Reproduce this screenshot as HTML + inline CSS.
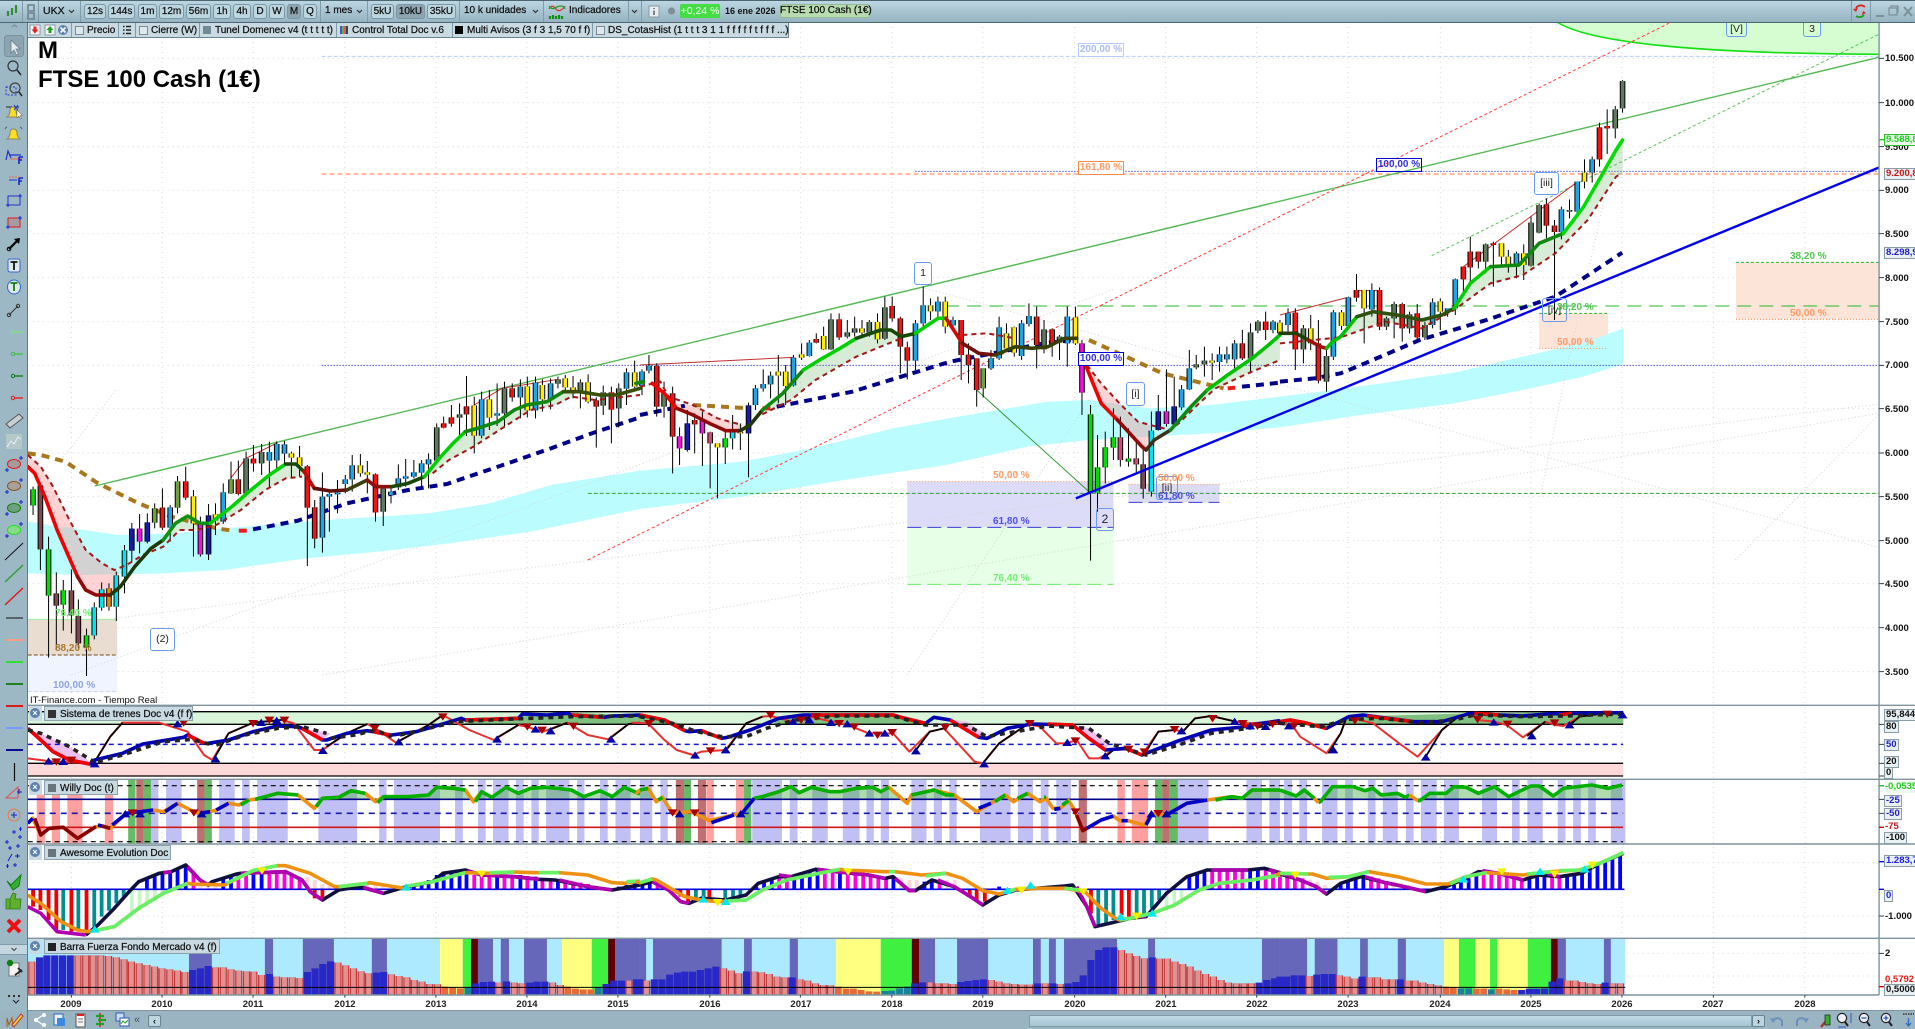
<!DOCTYPE html>
<html lang="es"><head><meta charset="utf-8"><title>FTSE 100 Cash</title>
<style>
html,body{margin:0;padding:0;background:#fff}
#r{position:relative;width:1915px;height:1029px;overflow:hidden;background:#fff;font-family:"Liberation Sans",sans-serif;font-size:10px;color:#111}
#r svg{position:absolute;left:0;top:0;overflow:hidden}
#c *{vector-effect:non-scaling-stroke}
.t,.b,.s,.a,.l,.x,.p,.ck,.sq{position:absolute;white-space:nowrap}
.t{line-height:14px;-webkit-text-stroke:.25px #111}
.b{top:4px;height:13px;line-height:13px;border:1px solid #7b98a6;border-radius:3px;background:#bcd5df;text-align:center;box-sizing:content-box;-webkit-text-stroke:.25px #111}
.on{background:#8ea5b0}
.s{width:1px;background:#7f9caa}
.a{left:1885px;font-weight:bold;font-size:9.5px;line-height:12px;color:#111;height:12px}
.bx{background:#e8f0f4;border:1px solid #8a9ca6;padding:0 1px;line-height:10px;height:10px;box-sizing:content-box}
.l{font-weight:bold;font-size:10px;line-height:12px;height:12px}
.lb{border:1.3px solid;background:#fff;height:12px;line-height:12px;width:44px;text-align:center;font-weight:bold;font-size:10px}
.x{border:1px solid #6a9bf0;border-radius:3px;text-align:center;font-size:10.5px;color:#222;box-sizing:border-box;background:#fff}
.p{left:44px;height:15px;line-height:15px;background:#c9dae2;border:1px solid #8aa0ab;box-sizing:border-box;padding-left:15px;-webkit-text-stroke:.25px #111}
.sq{width:8px;height:8px;top:3px}
.ck{width:7px;height:7px;border:1px solid #7a8c96;background:#dfe8ec;top:26px}
.cl{position:absolute;left:29px;width:13px;height:15px;background:#c9dae2}
.cl i{position:absolute;left:1px;top:2px;width:10px;height:10px;border-radius:50%;background:#5d82ae;color:#fff;font:bold 9px/10px "Liberation Sans",sans-serif;text-align:center}
.y{position:absolute;top:999px;width:30px;text-align:center;font-weight:bold;font-size:9.5px;line-height:12px;color:#222}
</style></head><body><div id="r">

<svg id="c" width="1915" height="1029" viewBox="0 0 4692 3087" preserveAspectRatio="none" fill="none">
<defs>
<marker id="tu" markerUnits="userSpaceOnUse" markerWidth="1" markerHeight="1" overflow="visible"><path d="M-12 10L0-12 12 10z" fill="#0000a8"/></marker>
<marker id="td" markerUnits="userSpaceOnUse" markerWidth="1" markerHeight="1" overflow="visible"><path d="M-12-10L0 12 12-10z" fill="#a80000"/></marker>
<marker id="cu" markerUnits="userSpaceOnUse" markerWidth="1" markerHeight="1" overflow="visible"><path d="M-12 10L0-12 12 10z" fill="#00e8f0"/></marker>
<marker id="yd" markerUnits="userSpaceOnUse" markerWidth="1" markerHeight="1" overflow="visible"><path d="M-12-10L0 12 12-10z" fill="#f4f000"/></marker>

<g id="cS">
<path transform="translate(0 1020)" d="M417 502V563M547 457V545M660 336V362M678 312V361M697 313V341M790 470V593M807 462V470M827 458V463M846 418V432M863 376V418M958 455V465M976 415V442M994 409V416M1014 397V410M1033 370V398M1050 358V373M1180 178V287M1218 220V227M1275 140V172M1312 128V211M1349 130V178M1535 97V146"/>
<path transform="translate(1568 1020)" d="M5 95V138M22 77V92M283 145V195M302 132V145M320 107V133M376 53V136M415 8V48M675-50V62M694-104V-50M730-115V-86M767-60V-44M860 55V85M880-38V55M935-50V48M953-72V-48M1047-70V10M1327 148V202M1346 85V148M1420 43V66M1438 43V58M1457 10V58M1551-55V-30"/>
<path transform="translate(3136 0) scale(.9923 1)" d="M20 940V975M132 937V1070M169 892V978M227 870V928M377 907V975M414 925V935M433 838V925M584 760V800M695 628V696M734 545V635M771 478V518"/>
</g>
<g id="cR">
<path transform="translate(0 1020)" d="M398 503V563M455 424V473M584 418V462M621 356V370M753 379V503M771 502V596M920 403V517M1087 250V263M1106 232V251M1143 199V223M1255 145V172M1461 181V200M1498 157V209"/>
<path transform="translate(1568 1020)" d="M41 78V200M80 160V290M134 240V253M432-3V8M488-62V-8M618-102V-65M638-65V20M655 22V62M787-60V45M805 44V75M825 55V150M972-70V15M1010-32V10M1476 10V55M1533-55V-30"/>
<path transform="translate(3136 0) scale(.9923 1)" d="M38 938V1048M95 1030V1142M189 870V893M246 870V980M302 912V985M339 940V1012M453 800V838M470 755V802M490 755V785M527 730V735M658 613V677M678 677V696M789 382V478M808 378V385"/>
</g>
<g id="cY">
<path transform="translate(0 1020)" d="M474 469V550M528 523V541M714 340V353M734 352V378M883 376V400M900 397V404M1162 196V287M1199 178V233M1292 139V211M1329 135V178M1385 115V142M1404 142V155M1441 127V185M1555 97V140"/>
<path transform="translate(1568 1020)" d="M190 310V322M246 275V280M339 95V107M357 95V138M396 43V53M450-12V28M544-35V-22M582-54V-2M712-104V-86M748-115V-40M898-20V25M917-38V38M1067-68V10M1402 62V68"/>
<path transform="translate(3136 0) scale(.9923 1)" d="M0 968V1000M76 985V1030M152 937V978M208 870V925M396 904V935M547 730V770M564 770V800M602 760V795M752 518V545"/>
</g>
<g id="cD">
<path transform="translate(0 1020)" d="M603 355V460M641 336V370M939 446V515M1070 262V362M1126 223V233M1236 145V220M1367 118V131M1422 127V155M1478 157V197M1516 145V205"/>
<path transform="translate(1568 1020)" d="M59 160V200M468-62V28M508-23V-10M526-35V-22M562-54V-22M600-98V-4M990-32V28M1028-10V8M1363 73V82M1383 62V73M1496-23V55M1514-55V-28"/>
<path transform="translate(3136 0) scale(.9923 1)" d="M58 985V1048M115 1068V1145M263 955V980M282 912V955M320 943V985M358 975V1012M508 733V785M620 668V797M640 615V698M715 630V635M828 328V385M846 243V325"/>
</g>
<g id="cG">
<path transform="translate(0 1020)" d="M81 448V496M119 628V767M155 751V794M212 886V922"/>
<path transform="translate(1568 1020)" d="M209 295V322M1104 223V458M1121 382V458M1140 322V382M1160 292V323M1197 356V365"/>
</g>
<g id="cB">
<path transform="translate(0 1020)" d="M99 436V628M138 760V797M175 751V826M192 828V910"/>
<path transform="translate(1568 1020)" d="M1233 373V446"/>
</g>
<g id="cC">
<path transform="translate(0 1020)" d="M231 802V886M249 748V803M285 706V800M305 631V710"/>
<path transform="translate(1568 1020)" d="M227 272V295M1253 272V455"/>
</g>
<g id="cN">
<path transform="translate(0 1020)" d="M323 566V632M361 547V605M511 526V643"/>
<path transform="translate(1568 1020)" d="M116 250V330M266 196V280M1270 214V270M1309 199V253"/>
</g>
<g id="cM">
<path transform="translate(0 1020)" d="M342 566V605M491 550V643"/>
<path transform="translate(1568 1020)" d="M97 289V325M153 241V280M1083 10V158M1290 214V252"/>
</g>
<g id="cO">
<path transform="translate(0 1020)" d="M379 505V548M435 424V503M566 418V460"/>
<path transform="translate(1568 1020)" d="M841 85V145"/>
</g>
<g id="cP"><path transform="translate(1568 1020)" d="M172 277V310M1177 292V360M1216 355V373"/></g>
<g id="cA"><path transform="translate(0 1020)" d="M267 745V800"/></g>
</defs>

<!-- grid -->
<path stroke="#d8d8d8" stroke-width="1" stroke-dasharray="1 4" d="M175 66V2985M397 66V2985M620 66V2985M845 66V2985M1068 66V2985M1291 66V2985M1514 66V2985M1739 66V2985M1961 66V2985M2185 66V2985M2408 66V2985M2633 66V2985M2856 66V2985M3079 66V2985M3303 66V2985M3529 66V2985M3751 66V2985M3974 66V2985M4198 66V2985M4422 66V2985M68 175H4604M68 308H4604M68 440H4604M68 571H4604M68 701H4604M68 833H4604M68 965H4604M68 1096H4604M68 1226H4604M68 1359H4604M68 1490H4604M68 1622H4604M68 1751H4604M68 1883H4604M68 2015H4604M68 2588H4604M68 2748H4604M68 2860H4604M68 2928H4604"/>

<!-- green ellipse top right -->
<g transform="translate(3136 0) scale(.9923 1)">
<path d="M684 66C760 125 1000 160 1478 163V66Z" fill="#d6fdd2"/>
<path d="M684 66C760 125 1000 160 1478 163" stroke="#14e014" stroke-width="1.6"/>
<path d="M1126 787H1478V958H1126Z" fill="#fde4d8"/>
<path d="M640 940H810V1045H640Z" fill="#fde4d8"/>
</g>

<!-- cyan band -->
<path fill="#bbfdff" d="M68 1565 180 1585 290 1605 420 1600 600 1580 800 1560 1050 1540 1200 1510 1350 1455 1568 1412 1818 1385 1988 1345 2188 1285 2348 1250 2568 1205 2668 1200 2818 1225 2968 1215 3136 1190 3235 1175 3384 1150 3563 1118 3731 1070 3890 1025 3977 985V1092L3880 1130 3731 1170 3563 1210 3334 1245 3136 1282 2968 1300 2818 1310 2668 1320 2518 1340 2318 1395 2068 1440 1818 1490 1568 1527 1300 1595 1100 1630 950 1652 750 1675 550 1710 400 1720 200 1725 68 1720Z"/>

<!-- fib boxes -->
<g transform="translate(0 1020)">
<path d="M68 838H287V945H68Z" fill="#e8ddd0"/><path d="M68 945H287V1055H68Z" fill="#f0f4ff"/>
<path d="M68 838H287" stroke="#a0f0a0" stroke-width="1"/><path d="M68 945H287" stroke="#7a4a10" stroke-dasharray="4 2"/><path d="M68 1055H287" stroke="#c8d4f0" stroke-dasharray="4 2"/>
</g>
<g transform="translate(1568 1020)">
<path d="M655 425H1160V562H655Z" fill="#dcdcf8"/><path d="M655 562H1160V733H655Z" fill="#e6ffe6"/>
<path d="M1197 433H1420V487H1197Z" fill="#dcdcf4"/>
<path d="M655 425H1160M1197 433H1420" stroke="#ff8c4c" stroke-dasharray="1 2"/>
<path d="M655 562H1160M1197 487H1420" stroke="#3c3ce0" stroke-dasharray="14 6"/>
<path d="M655 733H1160" stroke="#66ee66" stroke-dasharray="14 6"/>
</g>
<g transform="translate(3136 0) scale(.9923 1)">
<path d="M1126 787H1478M640 940H810" stroke="#28b828" stroke-dasharray="3 2"/>
<path d="M1126 958H1478M640 1045H810" stroke="#ff8c4c" stroke-dasharray="1 2"/>
</g>

<!-- grey dotted -->
<path stroke="#d4d4d4" stroke-width="1" stroke-dasharray="1 2.5" d="M280 1855L4603 1212M790 2025L4603 1240M2268 865L4603 1642M175 2025L2728 868M150 1380L285 1168M2223 2025L2668 1200M3774 1490 3850 1040 3930 600M4252 1680L4603 1245"/>

<!-- horizontals -->
<path d="M788 169H4604" stroke="#b8ccff" stroke-dasharray="4 2"/>
<path d="M788 522H4604" stroke="#ff7a3a" stroke-dasharray="5 3"/>
<path d="M2243 514H4604" stroke="#0000d8" stroke-dasharray="1 2"/>
<path d="M788 1096H4604" stroke="#0000d8" stroke-dasharray="1 2"/>
<path d="M2316 918H4604" stroke="#28b828" stroke-dasharray="14 8"/>
<path d="M1440 1480H4604" stroke="#33a033" stroke-dasharray="4 2"/>

<!-- trend lines -->
<path d="M232 1458L4603 172" stroke="#55b855" stroke-width="1.4"/>
<path d="M1440 1680L4089 70" stroke="#ff3a3a" stroke-dasharray="3 2.5" stroke-width="1"/>
<path d="M3508 767L4603 103" stroke="#5cc05c" stroke-dasharray="3 2.5" stroke-width="1"/>
<path d="M2393 1170L2668 1475" stroke="#339933" stroke-width="1"/>

<!-- fills -->
<g transform="translate(0 1020)">
<path fill="#ff8080" opacity=".35" d="M68 345 100 380 130 440 170 540 210 630 250 670 290 695 295 740 270 765 235 765 210 750 190 710 165 640 140 570 110 470 85 400 68 380Z"/>
<path fill="#60b060" opacity=".25" d="M400 600 430 550 460 528 490 550 515 550 570 498 610 455 660 405 700 372 725 372 745 395 740 410 700 415 650 450 590 510 530 555 480 570 440 570Z"/>
<path fill="#60b060" opacity=".25" d="M1040 410 1080 350 1110 310 1140 275 1170 265 1220 245 1260 210 1290 195 1340 185 1380 155 1420 155 1400 170 1360 195 1300 210 1230 265 1160 320 1100 360 1060 400Z"/>
</g>
<g transform="translate(1568 1020)">
<path fill="#ff8080" opacity=".35" d="M80 190 130 195 190 235 250 255 245 272 210 272 170 250 130 225 90 205Z"/>
<path fill="#60b060" opacity=".25" d="M265 255 300 210 350 160 400 90 440 60 490 25 530-5 590-30 615-30 640-10 600 15 530 50 430 120 370 180 280 235Z"/>
<path fill="#ff8080" opacity=".35" d="M1090 75 1130 130 1175 190 1220 245 1250 255 1240 330 1170 240 1130 190Z"/>
<path fill="#60b060" opacity=".25" d="M1300 270 1350 200 1390 150 1440 105 1500 55 1540 15 1568-15V60L1490 100 1410 145 1370 190 1320 250Z"/>
</g>
<g transform="translate(3136 0) scale(.9923 1)">
<path fill="#60b060" opacity=".25" d="M150 1010 190 950 230 935 290 945 350 960 400 945 430 925 470 850 520 800 590 795 640 730 700 700 750 620 790 535 830 450 846 420V520L830 530 760 660 680 760 600 825 520 850 430 930 350 985 260 965 150 1012Z"/>
</g>

<!-- slow MA navy/brown -->
<g stroke-width="4" stroke-dasharray="8 6">
<g transform="translate(0 1020)">
<path stroke="#a8781c" d="M68 340 100 345 160 365 240 430 340 490 420 530 530 565 570 572"/>
<path stroke="#f01818" d="M585 572H605"/>
<path stroke="#00008b" d="M620 568 730 542 850 490 1000 450 1095 432 1225 378 1350 325 1450 280 1568 232"/>
</g>
<g transform="translate(1568 1020)">
<path stroke="#00008b" d="M0 225 110 197"/><path stroke="#a8781c" d="M130 195 270 205"/><path stroke="#f01818" d="M300 205H320"/>
<path stroke="#00008b" d="M335 200 520 155 760 65 990 10 1060 0"/><path stroke="#a8781c" d="M1100 0 1200 55 1280 100 1430 145"/><path stroke="#f01818" d="M1440 145 1458 143"/>
<path stroke="#00008b" d="M1475 140 1568 128"/>
</g>
<path transform="translate(3136 0) scale(.9923 1)" stroke="#00008b" d="M0 1145 85 1135 150 1120 210 1090 345 1020 510 960 680 890 845 758"/>
</g>

<!-- thin red swing lines -->
<g stroke="#c03030" stroke-width="1">
<path transform="translate(0 1020)" d="M565 415 603 355 680 308M1162 195 1230 145 1367 118"/>
<path transform="translate(1568 1020)" d="M0 75 375 52"/>
<path transform="translate(3136 0) scale(.9923 1)" d="M0 945 165 893M185 872H246M453 800 735 545"/>
</g>

<!-- wicks -->
<g stroke="#000" stroke-width="1">
<path transform="translate(0 1020)" d="M81 440V525M99 430V690M119 590V953M138 697V930M155 720V872M175 688V880M192 778V925M212 866V1008M231 787V898M249 727V812M267 730V812M285 695V843M305 615V760M323 549V665M342 522V640M361 520V610M379 490V565M398 445V570M417 495V605M435 408V520M455 380V480M474 450V650M491 530V650M511 492V660M528 490V585M547 430V552M566 365V462M584 362V466M603 335V470M621 315V395M641 312V405M660 305V445M678 305V385M697 303V375M714 335V415M734 318V410M753 375V678M771 480V625M790 397V638M807 455V575M827 420V520M846 405V460M863 345V455M883 342V410M900 363V460M920 400V545M939 440V558M958 445V490M976 373V450M994 357V440M1014 360V415M1033 360V440M1050 340V445M1070 250V365M1087 230V265M1106 195V260M1126 190V285M1143 108V288M1162 170V340M1180 155V295M1199 150V270M1218 130V258M1236 125V260M1255 130V185M1275 118V235M1292 110V232M1312 110V235M1329 118V215M1349 115V208M1367 110V145M1385 105V160M1404 108V175M1422 118V205M1441 103V190M1461 172V323M1478 137V225M1498 140V310M1516 130V262M1535 85V195M1555 62V150"/>
<path transform="translate(1568 1020)" d="M5 88V165M22 45V100M41 70V230M59 125V233M80 140V400M97 262V375M116 210V335M134 220V340M153 215V378M172 275V445M190 310V475M209 275V372M227 225V328M246 250V330M266 188V412M283 135V210M302 88V155M320 95V175M339 45V190M357 75V195M376 45V140M396 10V60M415 0V50M432-20V10M450-40V30M468-80V30M488-80V0M508-60V-5M526-70V-10M544-60V-15M562-60V-10M582-80V10M600-130V0M618-130V-55M638-70V100M655 5V118M675-60V90M694-160V-40M712-125V-60M730-130V-60M748-130V-20M767-70V-30M787-60V120M805 10V130M825 55V200M841 85V172M860 30V90M880-70V60M898-50V30M917-40V50M935-60V60M953-110V-40M972-100V85M990-60V40M1010-35V50M1028-15V60M1047-100V80M1067-100V15M1083 0V225M1104 195V662M1121 285V515M1140 275V430M1160 205V360M1177 230V380M1197 265V380M1216 300V400M1233 320V476M1253 215V470M1270 165V272M1290 88V260M1309 110V258M1327 135V210M1346 30V150M1363 45V88M1383 20V110M1402 40V120M1420 20V95M1438 20V70M1457 0V92M1476-30V60M1496-50V100M1514-60V-20M1533-85V0M1551-60V-20"/>
<path transform="translate(3136 0) scale(.9923 1)" d="M0 960V1005M20 925V1000M38 925V1110M58 975V1090M76 945V1050M95 960V1150M115 1040V1175M132 930V1080M152 930V990M169 890V985M189 822V905M208 870V1030M227 850V950M246 862V990M263 950V990M282 905V1015M302 908V1025M320 935V1000M339 912V1020M358 965V1020M377 895V985M396 895V990M414 925V950M433 835V945M453 800V880M470 710V858M490 755V805M508 730V820M527 725V860M547 730V800M564 750V818M584 755V835M602 733V840M620 650V800M640 610V700M658 595V715M678 660V960M695 620V718M715 598V655M734 545V645M752 478V565M771 470V548M789 368V500M808 328V462M828 318V415M846 240V338"/>
</g>

<!-- candle bodies -->
<g stroke="#000" stroke-width="5.6">
<use href="#cS"/><use href="#cR"/><use href="#cY"/><use href="#cD"/><use href="#cG"/><use href="#cB"/><use href="#cC"/><use href="#cN"/><use href="#cM"/><use href="#cO"/><use href="#cP"/><use href="#cA"/>
</g>
<g stroke-width="3.6">
<use href="#cS" stroke="#1ea5e6"/><use href="#cR" stroke="#f01414"/><use href="#cY" stroke="#ffee00"/><use href="#cD" stroke="#5f7a60"/><use href="#cG" stroke="#00e000"/><use href="#cB" stroke="#7a4a50"/><use href="#cC" stroke="#00e6f0"/><use href="#cN" stroke="#1a1aa8"/><use href="#cM" stroke="#f010e0"/><use href="#cO" stroke="#70a040"/><use href="#cP" stroke="#d04878"/><use href="#cA" stroke="#e88a10"/>
</g>

<!-- fast MA + dashed -->
<g stroke="#a01818" stroke-width="2" stroke-dasharray="5 4">
<path transform="translate(0 1020)" d="M68 345 100 380 130 440 170 540 210 630 250 670 280 690 310 675 350 645 400 620 440 570 480 570 530 555 590 510 650 450 700 415 740 410M1060 400 1100 360 1160 320 1230 265 1300 210 1360 195 1400 170 1460 180 1568 165"/>
<path transform="translate(1568 1020)" d="M0 140 50 125 70 170 130 195 190 235 250 255M280 235 370 180 430 120 530 50 600 15 640-5M790-15 850-20 920-5M1095 75 1130 130 1175 190 1220 245 1250 255 1300 270 1320 250 1370 190 1410 145 1490 100 1568 60"/>
<path transform="translate(3136 0) scale(.9923 1)" d="M0 1030 150 1012 260 965 350 985 430 930 520 850 600 825 680 760 760 660 830 530 843 520"/>
</g>
<g stroke-width="3.6" stroke-linejoin="round" stroke-linecap="round">
<g transform="translate(0 1020)">
<path stroke="#f00000" d="M68 380 85 400 110 470 140 570 165 640 190 710"/>
<path stroke="#900808" d="M190 710 210 750 235 765 270 765"/>
<path stroke="#203808" d="M270 765 295 740 330 680 370 625 400 600"/>
<path stroke="#109010" d="M400 600 430 550 460 528 490 550 515 550"/>
<path stroke="#00d000" d="M515 550 570 498 610 455 660 405 700 372"/>
<path stroke="#184808" d="M700 372 725 372 745 395"/>
<path stroke="#c00808" d="M745 395 770 445"/>
<path stroke="#601008" d="M770 445 810 453 850 450"/>
<path stroke="#384008" d="M850 450 900 420"/>
<path stroke="#8a1008" d="M900 420 920 440 960 440"/>
<path stroke="#184808" d="M960 440 1000 430 1040 410"/>
<path stroke="#00d000" d="M1040 410 1080 350 1110 310 1140 275"/>
<path stroke="#108810" d="M1140 275 1170 265 1220 245 1260 210 1290 195 1340 185 1380 155"/>
<path stroke="#3a5008" d="M1380 155 1420 155 1470 165 1510 165 1568 145"/>
</g>
<g transform="translate(1568 1020)">
<path stroke="#108810" d="M-10 130 8 125"/>
<path stroke="#f00000" d="M30 130 60 160 90 205"/>
<path stroke="#900808" d="M90 205 130 225 170 250 210 272 245 272"/>
<path stroke="#203808" d="M245 272 270 255 300 210"/>
<path stroke="#108810" d="M300 210 350 160 400 90"/>
<path stroke="#00d000" d="M400 90 440 60 490 25 530-5"/>
<path stroke="#184808" d="M530-5 590-30 615-30 640-10 675-20"/>
<path stroke="#00d000" d="M675-20 730-65 750-65"/>
<path stroke="#d00808" d="M750-65 790 10"/>
<path stroke="#701008" d="M790 10 830 40 870 45"/>
<path stroke="#384008" d="M870 45 920 20 960 25 1000 20 1040-5 1070-5"/>
<path stroke="#f00000" d="M1085 40 1090 70 1130 190 1170 240"/>
<path stroke="#900808" d="M1170 240 1230 320 1240 330"/>
<path stroke="#403018" d="M1240 330 1260 300 1300 270"/>
<path stroke="#108810" d="M1300 270 1350 200 1390 150"/>
<path stroke="#00c000" d="M1390 150 1440 105 1500 55 1540 15 1568-15"/>
</g>
<g transform="translate(3136 0) scale(.9923 1)">
<path stroke="#204008" d="M0 1000 40 1000 70 1020"/>
<path stroke="#a01008" d="M70 1020 100 1040 115 1045"/>
<path stroke="#00c000" d="M115 1045 130 1025 150 1010 190 950"/>
<path stroke="#305010" d="M190 950 230 935 290 945 350 960 400 945 430 925"/>
<path stroke="#00d000" d="M430 925 470 850 520 800"/>
<path stroke="#108810" d="M520 800 590 795 640 730 700 700"/>
<path stroke="#00dd00" d="M700 700 750 620 790 535 830 450 846 420"/>
</g>
</g>

<path d="M2636 1495L4603 503" stroke="#0000ee" stroke-width="2.4"/>

<!-- SISTEMA -->
<path fill="#d9f5d9" d="M68 2135H3977V2173H68Z"/>
<path fill="#ffd9d9" d="M68 2290H3977V2328H68Z"/>
<g transform="translate(0 2100)">
<path fill="#7fbf7f" d="M1140 55 1270 50 1390 38 1568 45V73H1140Z"/>
<path fill="#eec0ee" d="M68 88 100 100 170 140 220 185 170 180 130 155 100 120ZM740 85 790 95 810 100 790 120ZM300 160 350 140 400 125 350 132Z"/>
</g>
<g transform="translate(1568 2100)">
<path fill="#7fbf7f" d="M0 45 60 60 110 73H0ZM330 55 400 45 620 45 640 52 700 73H330ZM930 73 960 70 1060 73Z"/>
<path fill="#eec0ee" d="M740 55 800 65 850 105 830 112 760 60ZM1070 75 1100 85 1150 130 1140 150 1100 115ZM1240 160 1320 122 1400 90 1470 82 1400 100 1320 132Z"/>
</g>
<path transform="translate(3136 2100) scale(.9923 1)" fill="#7fbf7f" d="M0 65 120 85 170 50 470 40 848 35V73H0Z"/>
<path stroke="#000" stroke-width="1.3" d="M68 2135H3977M68 2173H3977M68 2290H3977M68 2328H3977"/>
<path stroke="#1818d0" stroke-width="1.5" stroke-dasharray="5 4" d="M68 2233H3977"/>
<g stroke-linejoin="round" stroke-width="1.8">
<g transform="translate(0 2100)">
<path stroke="#e83030" stroke-width="2" d="M68 175 130 185 230 190 270 110 300 68 390 68 460 95 500 165 520 180 560 100 620 68 690 60 720 70 770 150 790 150 850 100 900 72 920 85 970 128 1050 75 1085 45 1150 90 1210 120 1270 75 1290 80 1330 95 1390 68 1440 105 1490 118 1540 72 1568 68"/>
<path stroke="#000" d="M232 185 270 110 300 68M525 175 560 100 620 68 690 60M800 140 850 100 900 72M975 125 1050 75 1085 45M1215 115 1270 75M1345 90 1390 68M1500 110 1540 72 1568 68"/>
</g>
<g transform="translate(1568 2100)">
<path stroke="#e83030" stroke-width="2" d="M-20 68 20 70 60 120 90 150 130 165 150 155 210 150 260 70 300 50 320 48 375 65 415 50 510 75 560 100 620 100 660 155 710 95 745 85 820 185 840 190 880 130 950 72 980 80 1020 130 1045 130 1070 120 1100 175 1125 175 1160 150 1195 148 1230 165 1270 95 1310 90 1330 95 1360 55 1400 48 1460 65 1490 70 1568 65"/>
<path stroke="#000" d="M215 145 260 70 300 50M675 152 710 95 745 85M840 190 880 130 950 72M1140 170 1160 150M1240 155 1270 95 1310 90M1330 95 1360 55 1400 48 1460 65M1510 75 1568 65"/>
</g>
<g transform="translate(3136 2100) scale(.9923 1)">
<path stroke="#e83030" stroke-width="2" d="M-10 70 30 75 50 110 115 160 150 100 165 50 230 70 300 135 340 170 400 90 440 50 470 40 490 60 530 65 560 75 600 112 655 65 680 75 700 78 740 50 800 40 846 40"/>
<path stroke="#000" d="M120 160 150 100 165 50M360 170 400 90 440 50 470 40M610 108 655 65M715 75 740 50 800 40 846 40"/>
</g>
</g>
<g stroke-width="3.6" stroke-linejoin="round">
<g transform="translate(0 2100)">
<path stroke="#0000b0" d="M68 85 100 120 130 155 170 180 220 192 232 180 300 160 350 132 400 122 450 112 460 105 500 130 510 130 560 120 620 95 680 78 730 80 740 85 790 120 800 120 850 100 900 92 915 95 955 105 960 105 1020 95 1090 70 1130 55 1140 60 1270 55 1280 42 1340 45 1390 40 1400 45 1480 52 1500 48 1568 45"/>
<path stroke="#f00000" d="M68 85 100 120 130 155 170 180 220 192M460 105 500 130M740 85 790 120M915 95 955 105M1140 60 1270 55M1400 45 1480 52"/>
<path stroke="#222" stroke-dasharray="5 5" d="M68 90 100 100 170 140 230 185M240 185 300 165 350 145 400 125 470 118 520 135M530 135 600 105 680 85 740 80 800 100M810 115 870 105 920 90 960 110M980 105 1050 85 1120 65 1200 60 1300 55 1400 50 1568 48"/>
</g>
<g transform="translate(1568 2100)">
<path stroke="#0000b0" d="M0 45 60 60 110 92 120 95 150 92 200 115 215 112 270 90 340 55 400 45 620 45 640 52 700 70 720 52 760 60 830 112 850 115 900 85 960 72 1060 75 1100 115 1140 150 1190 145 1230 165 1240 160 1320 122 1400 90 1470 82 1510 72 1568 62"/>
<path stroke="#f00000" d="M0 45 60 60 110 92M150 92 200 115M420 45 620 45 640 52 700 70M760 60 830 112M1000 72 1060 75 1100 115 1140 150M1190 145 1230 165M1480 78 1510 72"/>
<path stroke="#222" stroke-dasharray="5 5" d="M0 50 80 70 140 95 200 110 260 110 310 85 380 60 480 48 620 48 700 75 800 75 850 110 920 95 1000 78 1100 85 1150 130 1240 165 1320 135 1400 100 1490 85 1568 68"/>
</g>
<g transform="translate(3136 2100) scale(.9923 1)">
<path stroke="#0000b0" d="M0 65 25 60 60 68 115 85 170 50 205 45 330 65 400 65 470 40 540 45 600 48 660 42 720 40 846 38"/>
<path stroke="#f00000" d="M0 65 25 60 60 68 115 85M215 48 330 65M480 40 540 45M690 45 720 40"/>
<path stroke="#222" stroke-dasharray="5 5" d="M0 70 100 80 170 58 250 55 350 68 430 60 480 45 600 50 700 48 846 42"/>
</g>
</g>
<g transform="translate(0 2100)">
<path marker-start="url(#tu)" marker-mid="url(#tu)" marker-end="url(#tu)" d="M119 184 155 185 232 192 528 177 435 72 640 68 678 62 791 152 977 126 1218 118 1312 88 1349 93 1497 118"/>
<path marker-start="url(#td)" marker-mid="url(#td)" marker-end="url(#td)" d="M138 185 175 180 450 68 620 70 660 60 697 60 918 85 1085 50 1292 80 1328 90 1405 78"/>
</g>
<g transform="translate(1568 2100)">
<path marker-start="url(#tu)" marker-mid="url(#tu)" marker-end="url(#tu)" d="M135 166 210 150 375 65 415 60 468 68 508 72 562 100 600 100 676 153 843 192 1047 128 1140 168 1327 93 1457 65 1495 78 1533 80"/>
<path marker-start="url(#td)" marker-mid="url(#td)" marker-end="url(#td)" d="M22 70 173 152 320 45 395 60 432 50 488 70 525 80 582 105 618 97 748 82 955 70 1067 122 1197 147 1236 155 1310 88 1403 55 1477 70 1513 78 1550 72"/>
</g>
<g transform="translate(3136 2100) scale(.9923 1)">
<path marker-start="url(#tu)" marker-mid="url(#tu)" marker-end="url(#tu)" d="M22 78 132 150 360 172 528 67 622 108 715 75 846 45"/>
<path marker-start="url(#td)" marker-mid="url(#td)" marker-end="url(#td)" d="M35 78 185 62 488 58 562 72 678 68 808 42"/>
</g>

<!-- WILLY -->
<g transform="translate(0 2100)">
<path stroke="#c0c0f4" stroke-width="64" d="M370 334H388M407 334H445M537 334H575M593 334H612M630 334H705M780 334H875M929 334H947M965 334H1078M1115 334H1134M1171 334H1190M1208 334H1246M1264 334H1283M1302 334H1320M1338 334H1395M1414 334H1432M1470 334H1489M1508 334H1545"/>
<path stroke="#ffa0a0" stroke-width="50" d="M90 359H110M127 359H147M165 359H202M257 359H277"/>
<path stroke="#66bb66" stroke-width="64" d="M314 334H332M352 334H370M501 334H519"/>
<path stroke="#c07070" stroke-width="64" d="M334 334H352M483 334H501"/>
</g>
<g transform="translate(1568 2100)">
<path stroke="#c0c0f4" stroke-width="64" d="M0 334H30M50 334H68M275 334H348M367 334H386M422 334H460M497 334H538M555 334H573M590 334H610M665 334H702M720 334H740M758 334H776M833 334H908M926 334H963M982 334H1001M1020 334H1056M1318 334H1393M1486 334H1524M1542 334H1568"/>
<path stroke="#ffa0a0" stroke-width="64" d="M163 334H181M235 334H255M1170 334H1188M1205 334H1245"/>
<path stroke="#66bb66" stroke-width="64" d="M108 334H125M255 334H273M1262 334H1280M1298 334H1318"/>
<path stroke="#c07070" stroke-width="64" d="M88 334H108M142 334H162M1075 334H1095M1280 334H1298"/>
</g>
<path transform="translate(3136 2100) scale(.9923 1)" stroke="#c0c0f4" stroke-width="64" d="M10 334H30M48 334H67M104 334H142M161 334H180M217 334H236M254 334H291M311 334H330M348 334H387M405 334H442M499 334H536M573 334H592M611 334H649M686 334H705M724 334H743M761 334H780M817 334H853"/>
<!-- green area above navy -->
<g fill="#50b050" opacity=".45">
<path transform="translate(0 2100)" d="M775 298 790 295 830 292 860 272 895 280 910 298ZM925 298 940 290 1000 290 1050 285 1070 262 1110 265 1140 270 1150 298ZM1170 298 1180 275 1205 292 1240 262 1270 280 1300 265 1340 262 1400 270 1430 290 1470 272 1500 290 1530 262 1568 282V298Z"/>
<path transform="translate(1568 2100)" d="M0 298V270L20 265 30 298ZM280 295 300 290 340 275 370 260 390 278 420 262 465 275 490 275 530 265 570 262 590 275 610 262 640 298ZM660 298 665 285 720 270 750 285 770 285 790 298ZM1400 300 1450 290 1475 295 1500 270 1568 270V298Z"/>
<path transform="translate(3136 2100) scale(.9923 1)" d="M0 298V270L40 288 60 270 80 290 90 298ZM110 298 130 260 180 260 210 272 230 265 250 285 290 280 310 292 318 298ZM350 298 370 280 410 280 430 260 460 262 490 280 530 260 565 290 595 272 620 258 640 258 675 288 700 265 770 255 810 265 845 255V298Z"/>
</g>
<path stroke="#000" stroke-width="1.2" stroke-dasharray="5 4" d="M68 2357H3977M68 2525H3977"/>
<path stroke="#00008b" stroke-width="1.6" d="M68 2398H3977"/>
<path stroke="#1818b0" stroke-width="1.6" stroke-dasharray="6 5" d="M68 2440H3977"/>
<path stroke="#d01818" stroke-width="1.6" d="M68 2482H3977"/>
<g stroke-width="3.6" stroke-linejoin="round">
<g transform="translate(0 2100)">
<path stroke="#f09010" d="M68 370 80 355 100 405 120 385 155 382 190 415 235 380 250 378 270 385 310 340 375 330 400 335 435 310 475 335 490 340 515 335 530 330 560 310 585 315 610 300 625 298 680 280 730 285 770 325 790 295 830 292 860 272 895 280 920 305 940 290 1000 290 1050 285 1070 262 1110 265 1140 270 1160 305 1180 275"/>
<path stroke="#8a0000" d="M85 355 100 405 120 385 155 382 190 415 235 380M250 378 270 385"/>
<path stroke="#0000c8" d="M68 370 80 355M240 375 250 378M275 375 310 340 375 330M405 335 435 310M490 340 515 335M530 330 560 310"/>
<path stroke="#00b000" d="M590 315 610 300M625 298 680 280 730 285M775 320 790 295 830 292 860 272 895 280M925 308 940 290 1000 290 1050 285 1070 262 1110 265 1140 270M1165 305 1180 275 1205 292 1240 262 1270 280 1300 265 1340 262 1400 270 1430 290 1470 272 1500 290 1530 262 1568 282"/>
<path marker-start="url(#tu)" marker-mid="url(#tu)" marker-end="url(#tu)" stroke="none" d="M307 342 343 342 494 342"/>
<path marker-start="url(#td)" marker-mid="url(#td)" marker-end="url(#td)" stroke="none" d="M325 338 475 338"/>
</g>
<g transform="translate(1568 2100)">
<path stroke="#f09010" d="M-10 282 0 270 20 265 40 305 55 292 80 340 125 335 170 362 230 345 250 340 280 295 300 290 340 275 370 260 390 278 420 262 465 275 490 275 530 265 570 262 590 275 610 262 655 310 665 285 720 270 770 285 825 335 860 310 895 285 915 305 950 280 980 305 995 295 1012 325 1030 325 1050 302 1065 330 1085 392 1130 360 1160 348 1175 362 1195 362 1235 375 1255 340 1290 345 1340 310 1390 300 1450 290 1475 295 1500 270 1568 270"/>
<path stroke="#00b000" d="M0 270 20 265M45 300 55 292M280 295 300 290 340 275 370 260 390 278 420 262 465 275 490 275 530 265 570 262 590 275 610 262M665 285 720 270 750 285 770 285M870 305 895 285M925 295 950 280M990 292H995M1035 315 1050 302M1410 300 1450 290 1475 295 1500 270 1568 270"/>
<path stroke="#0000c8" d="M175 368 230 345M250 340 280 295M830 325 860 310M1015 328 1030 325M1095 385 1130 360 1160 348M1180 362H1195M1240 375 1255 340M1290 345 1340 310 1390 300"/>
<path stroke="#8a0000" d="M1070 345 1085 392 1095 385"/>
<path marker-start="url(#tu)" marker-mid="url(#tu)" marker-end="url(#tu)" stroke="none" d="M97 342 247 342 1253 342 1290 342"/>
<path marker-start="url(#td)" marker-mid="url(#td)" marker-end="url(#td)" stroke="none" d="M80 338 134 338 1067 335 1270 340"/>
</g>
<g transform="translate(3136 2100) scale(.9923 1)">
<path stroke="#00b000" d="M0 270 40 288 60 270 80 290 85 295M95 308 100 305 130 260 180 260 210 272 230 265 250 285 290 280 310 292 320 285M340 302 345 302 370 280 410 280 430 260 460 262 490 280 530 260 565 290 595 272 620 258 640 258 675 288 700 265 770 255 810 265 845 255"/>
<path stroke="#f09010" d="M85 295 95 308M320 285 340 302"/>
</g>
</g>

<!-- AWESOME -->
<g stroke-width="3.8">
<g transform="translate(0 2100)">
<path stroke="#f00000" d="M81 568V620M99 568V630M119 568V660M138 568V695M175 568V695M212 568V700M771 568V595M790 568V598"/>
<path stroke="#008f8f" d="M155 568V690M192 568V695M231 568V680M249 568V650M267 568V632M285 568V610M303 568V590"/>
<path stroke="#c8f4c8" d="M323 568V640M342 568V625M361 568V605M379 568V592M398 568V580"/>
<path stroke="#0000ff" d="M360 568V535M379 568V530M398 568V520M417 568V520M435 568V505M455 568V495M547 568V535M566 568V525M621 568V512M641 568V510M827 568V560M846 568V558M863 568V558M883 568V560M976 568V562M994 568V558M1014 568V555M1033 568V548M1050 568V540M1070 568V525M1087 568V515M1106 568V512M1126 568V510M1143 568V515M1218 568V528M1275 568V525M1312 568V530M1367 568V540M1516 568V560M1535 568V555M1555 568V550"/>
<path stroke="#ff00dd" d="M474 568V515M584 568V520M603 568V518M660 568V512M678 568V512M697 568V515M714 568V525M734 568V535M1162 568V525M1180 568V525M1199 568V530M1236 568V525M1255 568V525M1292 568V528M1329 568V535M1349 568V535M1385 568V540M1404 568V545M1422 568V548M1441 568V552"/>
<path stroke="#ffd4d4" d="M491 568V535M511 568V545M528 568V548M753 568V530M771 568V540M790 568V552M807 568V558M900 568V550M920 568V555M939 568V558M1461 568V560M1478 568V562M1498 568V565"/>
</g>
<g transform="translate(1568 2100)">
<path stroke="#0000ff" d="M6 568V555M24 568V548M285 568V560M304 568V545M323 568V535M378 568V527M397 568V520M416 568V515M435 568V510M490 568V512M621 568V530M697 568V545M715 568V540M865 568V565M880 568V560M1040 568V565M1346 568V530M1365 568V520M1383 568V512M1495 568V512M1514 568V505"/>
<path stroke="#ff00dd" d="M43 568V550M62 568V565M341 568V528M360 568V530M453 568V510M472 568V512M509 568V518M528 568V525M547 568V528M565 568V530M584 568V532M603 568V535M734 568V540M1402 568V510M1420 568V510M1439 568V510M1458 568V510M1476 568V510M1533 568V510M1551 568V515"/>
<path stroke="#ffd4d4" d="M640 568V535M660 568V540M678 568V540M753 568V540M771 568V540M80 568V570"/>
<path stroke="#f00000" d="M99 568V590M118 568V605M170 568V600M808 568V590M825 568V600M845 568V605M1105 568V640M1180 568V645M1198 568V650"/>
<path stroke="#008f8f" d="M137 568V598M156 568V600M209 568V600M228 568V595M246 568V590M790 568V575M1123 568V675M1142 568V670M1160 568V660M1217 568V650M1235 568V650M1254 568V625M1272 568V600"/>
<path stroke="#c8f4c8" d="M1290 568V625M1309 568V620M1327 568V600M1346 568V570"/>
</g>
<g transform="translate(3136 2100) scale(.9923 1)">
<path stroke="#ff00dd" d="M0 568V520M18 568V525M37 568V530M56 568V535M225 568V530M243 568V535M262 568V545M503 568V515M522 568V515M541 568V520M560 568V525M578 568V530M597 568V535M672 568V530M690 568V530"/>
<path stroke="#ffd4d4" d="M75 568V540M93 568V545M112 568V555M280 568V545M298 568V550M318 568V555"/>
<path stroke="#0000ff" d="M150 568V548M168 568V540M187 568V530M206 568V525M430 568V555M447 568V545M466 568V535M485 568V525M616 568V530M635 568V525M653 568V525M709 568V530M727 568V525M746 568V520M765 568V510M784 568V495M803 568V485M821 568V478M840 568V468"/>
</g>
</g>
<path stroke="#0000e0" stroke-width="1.6" d="M68 2668H3980"/>
<g stroke-width="3.6" stroke-linejoin="round">
<g transform="translate(0 2100)">
<path stroke="#101040" d="M210 705 240 675 280 625 320 570 340 545 390 520 420 515 455 495 490 540 510 555 520 545 580 522 590 520 700 515 740 540 760 575 790 600 830 570 880 560 940 580 990 562 1060 545 1085 520 1140 510 1180 525 1260 530 1320 538 1360 540 1440 560 1500 570 1568 555"/>
<path stroke="#b000b0" d="M68 620 100 640 140 695 210 705M400 518 420 515M460 500 490 540 510 555M590 520 700 515 740 540 760 575 790 600M890 562 940 580M1145 512 1180 525 1260 530 1320 538M1370 540 1440 560 1500 570"/>
<path stroke="#f09010" d="M68 585 100 610 150 665 190 690 215 695 240 690 280 680 340 625 400 580 460 550 470 552 550 555 620 512 680 497 700 497 760 520 820 560 830 560 900 550 905 548 990 565 1000 558 1060 545 1140 518 1195 520 1260 516 1310 518 1370 518 1440 525 1500 548 1530 550 1568 543"/>
<path stroke="#66f066" d="M240 690 280 680 340 625 400 580 460 550M555 550 620 512 680 497M830 560 900 550M1000 558 1060 545 1140 518M1200 518 1260 516M1320 518 1370 518M1535 545 1568 543"/>
<path marker-start="url(#cu)" marker-end="url(#cu)" stroke="none" d="M232 688 995 562"/>
<path marker-start="url(#yd)" marker-end="url(#yd)" stroke="none" d="M642 512 1180 522"/>
</g>
<g transform="translate(1568 2100)">
<path stroke="#101040" d="M0 555 30 545 70 570 100 605 120 610 150 595 210 600 260 585 290 550 340 530 370 530 430 508 480 515 560 525 600 535 620 530 660 572 675 572 715 540 770 560 810 590 840 615 880 585 920 570 1040 558 1060 555 1095 620 1115 680 1150 670 1200 655 1240 650 1290 580 1340 530 1390 510 1490 510 1530 505 1568 518"/>
<path stroke="#b000b0" d="M30 545 70 570 100 605 120 610M340 525 370 530M435 508 480 515 560 525 600 535M625 535 660 572 675 572M730 540 770 560 810 590 840 615M1070 560 1095 620 1115 680M1210 650 1240 650M1400 510 1490 510M1540 510 1568 518"/>
<path stroke="#f09010" d="M-10 545 0 548 30 537 40 540 110 590 150 600 190 605 215 603 260 600 300 570 360 540 430 522 490 508 500 510 600 515 625 515 690 525 750 520 790 535 840 572 880 582 920 568 975 565 1040 565 1090 575 1130 625 1165 655 1175 660 1200 655 1255 640 1310 615 1370 570 1420 550 1500 540 1568 525"/>
<path stroke="#66f066" d="M0 548 30 537M215 603 260 600 300 570 360 540 430 522 490 508M610 515H625M700 528 750 520M890 578 920 568M1040 565 1080 570M1175 660 1200 655 1255 640 1310 615 1370 570 1420 550 1500 540 1568 525"/>
<path marker-start="url(#cu)" marker-mid="url(#cu)" marker-end="url(#cu)" stroke="none" d="M155 598 210 605 900 572 957 556 1178 650 1255 640"/>
<path marker-start="url(#yd)" marker-mid="url(#yd)" marker-end="url(#yd)" stroke="none" d="M190 607 510 515 935 570 1085 575 1217 648"/>
</g>
<g transform="translate(3136 2100) scale(.9923 1)">
<path stroke="#101040" d="M-10 518 50 540 90 560 115 582 150 550 200 530 260 548 300 558 360 575 410 560 450 540 490 515 540 520 600 540 640 525 690 530 745 520 790 490 848 460"/>
<path stroke="#b000b0" d="M0 518 50 540 90 560 115 582M210 530 260 548 300 558 360 575M500 512 540 520 600 540M660 520 690 530"/>
<path stroke="#f09010" d="M-10 525 0 520 70 522 80 522 115 535 170 530 220 515 290 530 360 552 415 552 460 530 510 518 600 525 670 515 740 510 790 490 848 458"/>
<path stroke="#66f066" d="M0 520 70 522M120 532 170 530 220 515M420 552 460 530 510 518M610 522 670 515M690 512 740 510 790 490 848 458"/>
<path marker-start="url(#cu)" marker-mid="url(#cu)" marker-end="url(#cu)" stroke="none" d="M453 538 642 515 753 508"/>
<path marker-start="url(#yd)" marker-mid="url(#yd)" marker-end="url(#yd)" stroke="none" d="M38 525 548 515 678 522 772 495"/>
</g>
</g>

<!-- BARRA -->
<path fill="#aeeaff" d="M68 2817H3982V2985H68Z"/>
<g stroke-width="56">
<g transform="translate(0 2100)">
<path stroke="#6666bb" d="M463 801H519M649 801H669M742 801H818M911 801H948M1171 801H1208M1227 801H1247M1284 801H1340M1507 801H1568"/>
<path stroke="#ffff80" d="M1078 801H1134M1377 801H1450"/>
<path stroke="#40f040" d="M1134 801H1154M1450 801H1490"/>
<path stroke="#600000" d="M1154 801H1171M1490 801H1507"/>
</g>
<g transform="translate(1568 2100)">
<path stroke="#6666bb" d="M0 801H15M32 801H200M255 801H274M367 801H387M684 801H723M777 801H853M963 801H982M1002 801H1019M1039 801H1169M1245 801H1262M1524 801H1568"/>
<path stroke="#ffff80" d="M480 801H590"/>
<path stroke="#40f040" d="M590 801H666"/>
<path stroke="#600000" d="M666 801H684"/>
</g>
<g transform="translate(3136 2100) scale(.9923 1)">
<path stroke="#6666bb" d="M0 801H67M86 801H142M198 801H217M291 801H311M686 801H706M800 801H817"/>
<path stroke="#ffff80" d="M405 801H442M482 801H519M536 801H612"/>
<path stroke="#40f040" d="M442 801H482M519 801H536M612 801H669"/>
<path stroke="#600000" d="M669 801H686"/>
</g>
</g>
<!-- blue bars -->
<g stroke-width="7.2" stroke="#2828c8">
<path transform="translate(0 2100)" d="M97 885V772M115 885V766M134 885V766M153 885V766M172 885V766M472 885V810M491 885V805M510 885V798M660 885V822M753 885V816M772 885V805M791 885V792M810 885V784M922 885V818M940 885V816M1166 885V850M1185 885V846M1204 885V845M1241 885V844M1298 885V848M1316 885V845M1335 885V845M1485 885V852M1504 885V842M1523 885V842M1560 885V838"/>
<path transform="translate(1568 2100)" d="M0 885V838M35 885V838M54 885V838M73 885V824M92 885V818M110 885V815M129 885V815M148 885V810M167 885V805M186 885V800M261 885V814M373 885V832M673 885V850M692 885V847M786 885V846M804 885V843M823 885V840M842 885V838M974 885V850M1012 885V850M1049 885V850M1068 885V846M1086 885V826M1105 885V780M1124 885V750M1142 885V742M1161 885V742M1255 885V772M1517 885V848M1536 885V840M1555 885V835"/>
<path transform="translate(3136 2100) scale(.9923 1)" d="M0 885V830M16 885V830M35 885V826M54 885V826M91 885V824M110 885V822M129 885V822M203 885V830M297 885V838M597 885V870M616 885V866M634 885V866M653 885V865M672 885V845M691 885V835M803 885V848"/>
</g>
<!-- rose bars, drawn after the blue ones -->
<g stroke-width="7.2" stroke="#c03838">
<path transform="translate(0 2100)" d="M78 885V785M191 885V766M210 885V766M228 885V766M247 885V766M266 885V768M285 885V772M304 885V778M322 885V785M341 885V790M360 885V795M379 885V800M397 885V805M416 885V808M435 885V812M453 885V816M528 885V802M547 885V802M566 885V808M585 885V812M604 885V814M622 885V815M641 885V825M678 885V830M697 885V832M716 885V832M735 885V834M828 885V788M847 885V796M866 885V805M885 885V814M903 885V820M959 885V823M978 885V828M997 885V832M1015 885V840M1034 885V845M1053 885V852M1072 885V853M1222 885V848M1260 885V848M1279 885V850M1354 885V848M1373 885V855M1541 885V842"/>
<path transform="translate(1568 2100)" d="M16 885V842M205 885V805M224 885V812M242 885V820M280 885V815M298 885V817M317 885V822M336 885V830M355 885V832M392 885V838M411 885V842M430 885V850M449 885V855M467 885V856M711 885V847M730 885V850M748 885V850M767 885V852M861 885V840M880 885V845M899 885V850M918 885V852M936 885V854M955 885V854M993 885V850M1030 885V852M1180 885V750M1199 885V760M1217 885V768M1236 885V775M1273 885V776M1292 885V776M1311 885V785M1330 885V792M1348 885V800M1367 885V812M1386 885V822M1405 885V830M1424 885V840M1442 885V848M1461 885V850M1480 885V850M1498 885V850"/>
<path transform="translate(3136 2100) scale(.9923 1)" d="M72 885V828M147 885V826M166 885V830M185 885V836M222 885V832M241 885V832M260 885V838M278 885V838M316 885V842M334 885V842M353 885V848M372 885V852M391 885V856M710 885V842M729 885V842M747 885V846M766 885V850M785 885V852M822 885V850M841 885V850"/>
</g>
<g stroke-width="4.8" stroke="#e49090">
<path transform="translate(0 2100)" d="M78 885V785M191 885V766M210 885V766M228 885V766M247 885V766M266 885V768M285 885V772M304 885V778M322 885V785M341 885V790M360 885V795M379 885V800M397 885V805M416 885V808M435 885V812M453 885V816M528 885V802M547 885V802M566 885V808M585 885V812M604 885V814M622 885V815M641 885V825M678 885V830M697 885V832M716 885V832M735 885V834M828 885V788M847 885V796M866 885V805M885 885V814M903 885V820M959 885V823M978 885V828M997 885V832M1015 885V840M1034 885V845M1053 885V852M1072 885V853M1222 885V848M1260 885V848M1279 885V850M1354 885V848M1373 885V855M1541 885V842"/>
<path transform="translate(1568 2100)" d="M16 885V842M205 885V805M224 885V812M242 885V820M280 885V815M298 885V817M317 885V822M336 885V830M355 885V832M392 885V838M411 885V842M430 885V850M449 885V855M467 885V856M711 885V847M730 885V850M748 885V850M767 885V852M861 885V840M880 885V845M899 885V850M918 885V852M936 885V854M955 885V854M993 885V850M1030 885V852M1180 885V750M1199 885V760M1217 885V768M1236 885V775M1273 885V776M1292 885V776M1311 885V785M1330 885V792M1348 885V800M1367 885V812M1386 885V822M1405 885V830M1424 885V840M1442 885V848M1461 885V850M1480 885V850M1498 885V850"/>
<path transform="translate(3136 2100) scale(.9923 1)" d="M72 885V828M147 885V826M166 885V830M185 885V836M222 885V832M241 885V832M260 885V838M278 885V838M316 885V842M334 885V842M353 885V848M372 885V852M391 885V856M710 885V842M729 885V842M747 885V846M766 885V850M785 885V852M822 885V850M841 885V850"/>
</g>
<g stroke-width="6.8" stroke="#e86a3a">
<path transform="translate(0 2100)" d="M1090 885V860M1109 885V862M1128 885V865M1391 885V860M1410 885V866M1429 885V868M1448 885V868"/>
<path transform="translate(1568 2100)" d="M486 885V860M505 885V866M523 885V866M542 885V870M561 885V874M580 885V875"/>
<path transform="translate(3136 2100) scale(.9923 1)" d="M410 885V860M428 885V862M485 885V866M503 885V866M541 885V866M560 885V868M578 885V870"/>
</g>
<g stroke-width="6.8" stroke="#1a80a0">
<path transform="translate(0 2100)" d="M1147 885V862M1466 885V862"/>
<path transform="translate(1568 2100)" d="M600 885V873M617 885V872M636 885V865M655 885V860"/>
<path transform="translate(3136 2100) scale(.9923 1)" d="M447 885V865M466 885V865M522 885V868"/>
</g>
<path stroke="#000" stroke-width="1" d="M68 2962H3982"/>

<!-- panel frames & axis -->
<path stroke="#7f949e" stroke-width="1.4" d="M68 2116H4692M68 2338H4692M68 2532H4692M68 2815H4692M68 2985H4604M0 3032H4692M4604 66V2985"/>
<path stroke="#33424a" stroke-width="1" d="M4604 175h12M4604 308h12M4604 440h12M4604 571h12M4604 701h12M4604 833h12M4604 965h12M4604 1096h12M4604 1226h12M4604 1359h12M4604 1490h12M4604 1622h12M4604 1751h12M4604 1883h12M4604 2015h12M4604 2233h12M4604 2173h12M4604 2290h12M4604 2328h12M4604 2357h12M4604 2398h12M4604 2440h12M4604 2482h12M4604 2748h12M4604 2860h12M175 2985v8M397 2985v8M620 2985v8M845 2985v8M1068 2985v8M1291 2985v8M1514 2985v8M1739 2985v8M1961 2985v8M2185 2985v8M2408 2985v8M2633 2985v8M2856 2985v8M3079 2985v8M3303 2985v8M3529 2985v8M3751 2985v8M3974 2985v8M4198 2985v8M4422 2985v8"/>
<path stroke="#0000d0" stroke-width="1.4" d="M4604 2668h12M4604 2585h12"/>
<path stroke="#d00000" stroke-width="1.4" d="M4604 2960h12M4604 2482h12"/>
<path stroke="#20c020" stroke-width="1.4" d="M4604 419h12M4604 2357h12"/>
</svg>

<!-- wave labels -->
<div class="x" style="left:914px;top:262px;width:18px;height:23px;line-height:21px">1</div>
<div class="x" style="left:150px;top:628px;width:25px;height:23px;line-height:21px">(2)</div>
<div class="x" style="left:1096px;top:508px;width:18px;height:23px;line-height:21px;background:none;font-size:12px">2</div>
<div class="x" style="left:1126px;top:382px;width:19px;height:24px;line-height:22px">[i]</div>
<div class="x" style="left:1156px;top:476px;width:22px;height:24px;line-height:22px;background:none">[ii]</div>
<div class="x" style="left:1534px;top:172px;width:25px;height:23px;line-height:21px">[iii]</div>
<div class="x" style="left:1542px;top:298px;width:25px;height:24px;line-height:22px;background:none">[iv]</div>
<div class="x" style="left:1726px;top:16px;width:21px;height:21px;line-height:24px;background:none">[V]</div>
<div class="x" style="left:1803px;top:16px;width:18px;height:21px;line-height:24px;background:none">3</div>

<div class="l lb" style="left:1078px;top:43px;color:#a8bcee;border-color:#b8ccff">200,00 %</div>
<div class="l lb" style="left:1078px;top:161px;color:#ff9a66;border-color:#ff8c4c">161,80 %</div>
<div class="l lb" style="left:1376px;top:158px;color:#3030e0;border-color:#0000d8;background:none">100,00 %</div>
<div class="l lb" style="left:1078px;top:352px;color:#3030e0;border-color:#0000d8">100,00 %</div>

<div class="l" style="left:993px;top:470px;color:#ff9a66">50,00 %</div>
<div class="l" style="left:993px;top:516px;color:#5050e0">61,80 %</div>
<div class="l" style="left:993px;top:573px;color:#70ee70">76,40 %</div>
<div class="l" style="left:1158px;top:473px;color:#ff9a66">50,00 %</div>
<div class="l" style="left:1158px;top:491px;color:#5050e0">61,80 %</div>
<div class="l" style="left:55px;top:608px;color:#70ee70">76,40 %</div>
<div class="l" style="left:55px;top:643px;color:#a87830">88,20 %</div>
<div class="l" style="left:53px;top:680px;color:#8fa5dd">100,00 %</div>
<div class="l" style="left:1790px;top:251px;color:#50c850">38,20 %</div>
<div class="l" style="left:1790px;top:308px;color:#ff9a66">50,00 %</div>
<div class="l" style="left:1557px;top:302px;color:#50c850">38,20 %</div>
<div class="l" style="left:1557px;top:337px;color:#ff9a66">50,00 %</div>

<div style="position:absolute;left:38px;top:37px;font-weight:bold;font-size:24px;line-height:28px;color:#000">M</div>
<div style="position:absolute;left:38px;top:66px;font-weight:bold;font-size:24px;line-height:28px;color:#000;white-space:nowrap">FTSE 100 Cash (1€)</div>
<div style="position:absolute;left:30px;top:695px;font-size:9.5px;line-height:12px;white-space:nowrap;color:#111">IT-Finance.com - Tiempo Real</div>

<!-- price axis -->
<div class="a" style="top:53px">10.500</div><div class="a" style="top:98px">10.000</div>
<div class="a" style="top:142px">9.500</div><div class="a" style="top:185px">9.000</div>
<div class="a" style="top:229px">8.500</div><div class="a" style="top:273px">8.000</div>
<div class="a" style="top:317px">7.500</div><div class="a" style="top:360px">7.000</div>
<div class="a" style="top:404px">6.500</div><div class="a" style="top:448px">6.000</div>
<div class="a" style="top:492px">5.500</div><div class="a" style="top:536px">5.000</div>
<div class="a" style="top:579px">4.500</div><div class="a" style="top:623px">4.000</div>
<div class="a" style="top:667px">3.500</div>
<div class="a bx" style="left:1884px;top:134px;color:#22cc22;border-color:#30c030;background:#eefaee">9.588,8</div>
<div class="a bx" style="left:1884px;top:168px;color:#c01818">9.200,8</div>
<div class="a bx" style="left:1884px;top:247px;color:#2020c0">8.298,9</div>

<div class="a bx" style="left:1884px;top:709px">95,844</div>
<div class="a bx" style="top:721px;left:1884px">80</div>
<div class="a bx" style="top:739px;left:1884px;color:#2020c0">50</div>
<div class="a bx" style="top:756px;left:1884px">20</div>
<div class="a bx" style="top:767px;left:1884px">0</div>
<div class="a" style="top:781px;left:1885px;color:#22cc22;background:#eefaee">-0,0535</div>
<div class="a bx" style="top:795px;left:1884px;color:#2020c0">-25</div>
<div class="a bx" style="top:808px;left:1884px;color:#2020c0">-50</div>
<div class="a" style="top:821px;left:1885px;color:#c01818">-75</div>
<div class="a bx" style="top:832px;left:1884px">-100</div>
<div class="a bx" style="top:855px;left:1884px;color:#2020f0">1.283,7</div>
<div class="a bx" style="top:890px;left:1884px;color:#2020f0">0</div>
<div class="a" style="top:911px">-1.000</div>
<div class="a" style="top:948px">2</div>
<div class="a" style="top:974px;color:#e01818">0,5792</div>
<div class="a bx" style="top:984px;left:1884px">0,5000</div>

<!-- time axis -->
<div class="y" style="left:56px">2009</div><div class="y" style="left:147px">2010</div><div class="y" style="left:238px">2011</div><div class="y" style="left:330px">2012</div><div class="y" style="left:421px">2013</div><div class="y" style="left:512px">2014</div><div class="y" style="left:603px">2015</div><div class="y" style="left:695px">2016</div><div class="y" style="left:786px">2017</div><div class="y" style="left:877px">2018</div><div class="y" style="left:968px">2019</div><div class="y" style="left:1060px">2020</div><div class="y" style="left:1151px">2021</div><div class="y" style="left:1242px">2022</div><div class="y" style="left:1333px">2023</div><div class="y" style="left:1425px">2024</div><div class="y" style="left:1516px">2025</div><div class="y" style="left:1607px">2026</div><div class="y" style="left:1698px">2027</div><div class="y" style="left:1790px">2028</div>

<!-- sub panel tabs -->
<div class="cl" style="top:706px"><i>×</i></div>
<div class="p" style="top:706px;width:149px"><span class="sq" style="left:3px;background:#333"></span>Sistema de trenes Doc v4 (f f)</div>
<div class="cl" style="top:780px"><i>×</i></div>
<div class="p" style="top:780px;width:74px"><span class="sq" style="left:3px;background:#69757c"></span>Willy Doc (t)</div>
<div class="cl" style="top:845px"><i>×</i></div>
<div class="p" style="top:845px;width:127px"><span class="sq" style="left:3px;background:#69757c"></span>Awesome Evolution Doc</div>
<div class="cl" style="top:939px"><i>×</i></div>
<div class="p" style="top:939px;width:176px"><span class="sq" style="left:3px;background:#222"></span>Barra Fuerza Fondo Mercado v4 (f)</div>

<!-- top toolbar -->
<div style="position:absolute;left:0;top:0;width:1915px;height:23px;background:linear-gradient(#bcd6e2,#95b3c1);border-top:1px solid #4c6672;border-bottom:1px solid #4c6672;box-sizing:border-box"></div>
<div class="s" style="left:22px;top:1px;height:21px"></div><div class="s" style="left:38px;top:1px;height:21px"></div><div class="s" style="left:80px;top:1px;height:21px"></div><div class="s" style="left:320px;top:1px;height:21px"></div><div class="s" style="left:367px;top:1px;height:21px"></div><div class="s" style="left:459px;top:1px;height:21px"></div><div class="s" style="left:543px;top:1px;height:21px"></div><div class="s" style="left:628px;top:1px;height:21px"></div><div class="s" style="left:641px;top:1px;height:21px"></div><div class="s" style="left:1851px;top:1px;height:21px"></div><div class="s" style="left:1870px;top:1px;height:21px"></div>
<div class="t" style="left:43px;top:4px;font-size:10.5px">UKX</div>
<div class="b" style="left:84px;width:20px">12s</div><div class="b" style="left:108px;width:25px">144s</div><div class="b" style="left:138px;width:17px">1m</div><div class="b" style="left:159px;width:23px">12m</div><div class="b" style="left:186px;width:23px">56m</div><div class="b" style="left:213px;width:16px">1h</div><div class="b" style="left:233px;width:16px">4h</div><div class="b" style="left:253px;width:12px">D</div><div class="b" style="left:269px;width:14px">W</div><div class="b on" style="left:287px;width:12px">M</div><div class="b" style="left:303px;width:12px">Q</div>
<div class="t" style="left:325px;top:4px">1 mes</div>
<div class="b" style="left:371px;width:21px">5kU</div><div class="b on" style="left:396px;width:27px">10kU</div><div class="b" style="left:427px;width:27px">35kU</div>
<div class="t" style="left:464px;top:4px">10 k unidades</div>
<div class="t" style="left:569px;top:4px">Indicadores</div>
<div class="t" style="left:680px;top:4px;width:40px;height:14px;background:#44dd44;border-radius:2px;color:#fff;text-align:center;-webkit-text-stroke:0;font-size:10.5px">+0,24 %</div>
<div class="t" style="left:725px;top:4px;font-weight:bold;-webkit-text-stroke:0;font-size:9px">16 ene 2026</div>
<div class="t" style="left:780px;top:4px;width:90px;height:14px;background:#b8dcb0;border-radius:3px;box-shadow:inset 0 0 0 1px #94bc94;text-align:center">FTSE 100 Cash (1€)</div>

<!-- row 2 tabs -->
<div style="position:absolute;left:28px;top:23px;width:761px;height:15px;background:#c9dae2;border-bottom:1px solid #6a8592;border-right:1px solid #6a8592;box-sizing:border-box"></div>
<div class="s" style="left:71px;top:23px;height:14px"></div><div class="s" style="left:118px;top:23px;height:14px"></div><div class="s" style="left:135px;top:23px;height:14px"></div><div class="s" style="left:199px;top:23px;height:14px"></div><div class="s" style="left:336px;top:23px;height:14px"></div><div class="s" style="left:452px;top:23px;height:14px"></div><div class="s" style="left:592px;top:23px;height:14px"></div>
<div class="ck" style="left:75px"></div><div class="t" style="left:87px;top:24px">Precio</div>
<div class="ck" style="left:139px"></div><div class="t" style="left:151px;top:24px">Cierre (W)</div>
<div class="sq" style="left:203px;top:26px;background:#708a96"></div><div class="t" style="left:215px;top:24px">Tunel Domenec v4 (t t t t t)</div>
<div class="t" style="left:352px;top:24px">Control Total Doc v.6</div>
<div class="sq" style="left:455px;top:26px;background:#000"></div><div class="t" style="left:467px;top:24px">Multi Avisos (3 f 3 1,5 70 f f)</div>
<div class="ck" style="left:596px"></div><div class="t" style="left:608px;top:24px">DS_CotasHist (1 t t t 3 1 1 f f f f f t f f f ...)</div>

<!-- left toolbar -->
<div style="position:absolute;left:0;top:23px;width:28px;height:988px;background:#9db8c5;border-right:1px solid #5f7c8a;box-sizing:border-box"></div>
<div style="position:absolute;left:4px;top:35px;width:20px;height:22px;background:#8ca4b0;border:1px solid #7a929e;border-radius:3px;box-sizing:border-box"></div>
<div style="position:absolute;left:0;top:944px;width:27px;height:11px;background:#c4d6df;border-top:1px solid #7f9caa;border-bottom:1px solid #7f9caa;box-sizing:border-box"></div>

<!-- bottom bar -->
<div style="position:absolute;left:0;top:1011px;width:1915px;height:18px;background:#9ab4c2"></div>
<div class="s" style="left:27px;top:1011px;height:18px;background:#5f7c8a"></div>
<div style="position:absolute;left:148px;top:1015px;width:13px;height:12px;background:#bcd5df;border:1px solid #6a8592;box-sizing:border-box;border-radius:2px;font:bold 9px/10px 'Liberation Sans',sans-serif;text-align:center">‹</div>
<div style="position:absolute;left:1029px;top:1015px;width:723px;height:12px;background:linear-gradient(#c0dae5,#a5c5d2);border:1px solid #7f9caa;box-sizing:border-box"></div>
<div style="position:absolute;left:1752px;top:1015px;width:13px;height:12px;background:#bcd5df;border:1px solid #6a8592;box-sizing:border-box;border-radius:2px;font:bold 9px/10px 'Liberation Sans',sans-serif;text-align:center">›</div>
<div style="position:absolute;left:134px;top:1013px;font:11px/14px 'Liberation Sans',sans-serif;color:#456">«</div>

<!-- icon layer -->
<svg width="1915" height="1029" viewBox="0 0 1915 1029" fill="none">
<!-- top icons -->
<path d="M8 16v-5M12 15v-7M16 13V5" stroke="#3a8a3a" stroke-width="2.2"/>
<path d="M28 5h6v6h-6zM28 13h6v6h-6z" stroke="#6d828c" stroke-width="1.6"/>
<path d="M69 10l2.500 2.500L74 10M357 10l2.500 2.500L362 10M533 10l2.500 2.500L538 10M632 10l2.500 2.500L637 10" stroke="#333" stroke-width="1.2"/>
<path d="M549 9q3-5 6-1t6 2 4-4" stroke="#e03030" stroke-width="1.2"/><path d="M549 6q3 4 6 2t6-2 4 3" stroke="#20a020" stroke-width="1.2"/>
<path d="M550 19v-3M553 19v-4M556 19v-3M559 19v-4M562 19v-3" stroke="#109010" stroke-width="2.2"/>
<rect x="649" y="6" width="10" height="11" fill="#e8eef1" stroke="#8a9aa2"/><path d="M654 8v1M654 10.500v4.500" stroke="#666" stroke-width="1.6"/>
<circle cx="671.5" cy="11" r="3.6" fill="#7d8f98"/>
<path d="M1856 8a6 6 0 0 1 9-1" stroke="#e02020" stroke-width="1.8"/><path d="M1864 15a6 6 0 0 1-8 1" stroke="#20a020" stroke-width="1.8"/><path d="M1853 9l3 3 2-4zM1866 13l-3-2-1 4z" fill="#e02020"/>
<path d="M1876 16h8" stroke="#7d8f98" stroke-width="2"/><path d="M1889 8h8v7h-8zM1891 8V6h7v6h-1" stroke="#7d8f98" stroke-width="1.2"/><path d="M1904 7l8 9M1912 7l-8 9" stroke="#7d8f98" stroke-width="2"/>
<!-- row 2 icons -->
<rect x="30" y="25" width="10" height="10" fill="#f6f6f6" stroke="#8a9aa2"/><path d="M33.500 26.500h3v3h2l-3.500 4-3.500-4h2z" fill="#e02020"/>
<rect x="45" y="25" width="10" height="10" fill="#f6f6f6" stroke="#8a9aa2"/><path d="M50 26l3.500 4h-2v3h-3v-3h-2z" fill="#20a020"/>
<circle cx="63" cy="30" r="5" fill="#5d82ae"/><path d="M60.500 27.500l5 5M65.500 27.500l-5 5" stroke="#fff" stroke-width="1.6"/>
<path d="M126 26.500h5M126 30h5M126 33.500h5M123 26.500h1.500M123 30h1.500M123 33.500h1.500" stroke="#222" stroke-width="1.4"/>
<path d="M341 26v8" stroke="#1818c0" stroke-width="1.4"/><path d="M343 26v8" stroke="#20a020" stroke-width="1.4"/><path d="M345 26v8" stroke="#e02020" stroke-width="1.4"/><path d="M347 26v8" stroke="#000" stroke-width="1.4"/>
<path d="M12 27l2.500-2 2.500 2" stroke="#788c96" stroke-width="1.2"/>
<!-- left tools -->
<path d="M11 40v13l3-3 2.500 5 2-1-2.500-5h4z" fill="#e2eaee" stroke="#6d7f88" stroke-width=".8"/>
<circle cx="13" cy="66" r="5" stroke="#333" stroke-width="1.2"/><path d="M17 70l4 5" stroke="#222" stroke-width="1.5"/>
<rect x="6" y="87" width="10" height="8" stroke="#2233cc" stroke-dasharray="2 1.5"/><circle cx="15" cy="88" r="5" stroke="#444" stroke-width="1.2"/><path d="M19 92l3 4" stroke="#222" stroke-width="1.5"/>
<path d="M6 107h13" stroke="#222"/><path d="M7 117q3-2 3-6t3-4 3 4 3 6z" fill="#ffdd22" stroke="#886"/><path d="M14 105l4 5M18 105l-4 5" stroke="#2233cc"/><path d="M17 110v8l2-2 1.500 3 1-.7-1.500-2.500h2.500z" fill="#fff" stroke="#555" stroke-width=".5"/>
<path d="M7 139q3-2 3-6t3.500-4 3.500 4 3 6z" fill="#ffdd22" stroke="#886"/><path d="M5 129q1-2 2-2M22 129q-1-2-2-2" stroke="#555"/>
<path d="M6 160l2-9 3 7M9 155h12" stroke="#2233cc" stroke-width="1.2"/><path d="M10 159h12" stroke="#ee6644"/><path d="M19 157h4M19 157v7M19 160h3" stroke="#1122cc" stroke-width="1.6"/>
<path d="M9 177h10" stroke="#ee6644" stroke-dasharray="2 1"/><path d="M9 180h8" stroke="#2233cc"/><path d="M19 178h4M19 178v7M19 181h3" stroke="#1122cc" stroke-width="1.6"/>
<rect x="8" y="196" width="12" height="9" stroke="#2233cc"/><path d="M6 205h4M8 203v4M18 196h4M20 194v4" stroke="#1122cc"/>
<rect x="8" y="218" width="12" height="9" fill="#a99aa0" stroke="#e01818"/><path d="M6 227h4M8 225v4M18 218h4M20 216v4" stroke="#1122cc"/>
<path d="M9 249l9-9" stroke="#000" stroke-width="2.2"/><path d="M20 238l-6 1 5 5z" fill="#000"/><circle cx="9" cy="249" r="1.800" stroke="#000"/>
<rect x="8" y="259" width="12" height="13" rx="2" fill="#dce8ee" stroke="#3366cc"/><path d="M10.500 262h7M14 262v8" stroke="#111" stroke-width="1.8"/>
<ellipse cx="14" cy="287" rx="6.5" ry="7" fill="#dce8ee" stroke="#3366cc"/><path d="M10.500 283h7M14 283v8" stroke="#108010" stroke-width="1.8"/>
<path d="M9 315l9-9" stroke="#333"/><circle cx="9" cy="315" r="1.7" stroke="#333"/><circle cx="18" cy="306" r="1.7" stroke="#333"/>
<path d="M15 332h8" stroke="#80e080" stroke-width="1.3"/><circle cx="13" cy="332" r="1.7" stroke="#80e080"/>
<path d="M15 354h8" stroke="#40c040" stroke-width="1.3"/><circle cx="13" cy="354" r="1.7" stroke="#40c040"/>
<path d="M15 376h8" stroke="#0a7a0a" stroke-width="1.3"/><circle cx="13" cy="376" r="1.7" stroke="#0a7a0a"/>
<path d="M15 398h8" stroke="#e01818" stroke-width="1.3"/><circle cx="13" cy="398" r="1.7" stroke="#e01818"/>
<path d="M6 424l13-10 4 4-13 10z" fill="#c8d0d4" stroke="#555"/>
<rect x="6" y="434" width="16" height="15" fill="#b4c8c8"/><path d="M7 447l4-6 3 3 4-7 3 2" stroke="#e8eeff"/>
<ellipse cx="14" cy="464" rx="6.5" ry="4.5" fill="#a89a9c" stroke="#e01818"/><path d="M5 470h4M7 468v4M19 458h4M21 456v4" stroke="#1122cc"/>
<ellipse cx="14" cy="486" rx="6.5" ry="4.5" fill="#a8a298" stroke="#885020"/><path d="M5 492h4M7 490v4M19 480h4M21 478v4" stroke="#1122cc"/>
<ellipse cx="14" cy="508" rx="6.5" ry="4.5" fill="#70a080" stroke="#108010"/><path d="M5 514h4M7 512v4M19 502h4M21 500v4" stroke="#1122cc"/>
<ellipse cx="14" cy="530" rx="6.5" ry="4.5" fill="#88dc88" stroke="#20e020"/><path d="M5 536h4M7 534v4M19 524h4M21 522v4" stroke="#1122cc"/>
<path d="M5 560l18-17" stroke="#111"/><path d="M5 582l18-17" stroke="#30a030" stroke-width="1.5"/><path d="M5 605l18-17" stroke="#e01818" stroke-width="1.5"/>
<path d="M6 618h17" stroke="#111"/><path d="M6 640h17" stroke="#ff9980" stroke-width="2"/><path d="M6 662h17" stroke="#30e030" stroke-width="2"/><path d="M6 684h17" stroke="#208020" stroke-width="2"/><path d="M6 706h17" stroke="#e01818" stroke-width="2"/><path d="M6 728h17" stroke="#7799ff" stroke-width="2"/><path d="M6 750h17" stroke="#0a0a90" stroke-width="2"/><path d="M14.500 763v18" stroke="#111" stroke-width="1.2"/>
<path d="M6 798l12-11v11z" stroke="#e05050"/><path d="M17 792h5M19 789v5" stroke="#1122cc"/>
<circle cx="14" cy="815" r="6" stroke="#ee7744"/><path d="M11 815h6M14 812v6" stroke="#1122cc"/>
<path d="M5 842h4M7 840v4M12 832h4M14 830v4M18 837h4M20 835v4M8 848h4M10 846v4M16 846h4M18 844v4M19 829h3M20.500 827v4" stroke="#1122cc"/>
<path d="M6 866h3M7.500 864v4M15 856h5M17.500 854v4M13 865h4M15 863v4M8 861l4-7" stroke="#1122cc"/>
<path d="M7 881l4 4 10-10-2 11-6 4z" fill="#30b030" stroke="#108010"/>
<path d="M6 899h4v10H6zM10 899l3-6 3 1-1 5h6l-1 10H10z" fill="#60b030" stroke="#2a7a10" stroke-width=".8"/>
<path d="M8 920l12 12M20 920L8 932" stroke="#ee1010" stroke-width="4"/>
<path d="M11.500 948l2.500 2.500 2.500-2.500" stroke="#444"/>
<rect x="9" y="963" width="10" height="13" fill="#f4f4f4" stroke="#777"/><circle cx="10" cy="963" r="3.200" fill="#108010"/><path d="M15 975l7-5M18 968l4 4" stroke="#222" stroke-width="1.800"/>
<circle cx="9" cy="996" r="1.100" fill="#222"/><circle cx="14" cy="996" r="1.100" fill="#222"/><circle cx="19" cy="996" r="1.100" fill="#222"/><path d="M13 1000l3 3 3-3" stroke="#222"/>
<path d="M7 1027v-9l2 7 3-7 1 9" stroke="#a06020"/><path d="M12 1025l9-11 2 2-9 11z" fill="#ffcc33" stroke="#b04040"/>
<!-- bottom icons -->
<path d="M36 1020l7-5M36 1020l7 5" stroke="#fff" stroke-width="1.200"/><circle cx="36" cy="1020" r="2" fill="#fff"/><circle cx="44" cy="1015" r="2" fill="#fff"/><circle cx="44" cy="1025" r="2" fill="#fff"/>
<rect x="54" y="1014" width="9" height="11" fill="#eef" stroke="#2a6ac0"/><rect x="57" y="1018" width="8" height="8" fill="#3a8ae0"/>
<rect x="76" y="1014" width="9" height="13" fill="#f4f4f4" stroke="#555"/><path d="M77 1015h7" stroke="#e02020" stroke-width="2"/><path d="M78 1019h5M78 1022h5" stroke="#777"/>
<path d="M100 1013v14" stroke="#e02020" stroke-width="1.600"/><path d="M96 1016h8M98 1020h8M96 1024h8" stroke="#20a020" stroke-width="2.200"/>
<rect x="116" y="1013" width="8" height="8" fill="#cde" stroke="#2a5ab0"/><rect x="120" y="1018" width="9" height="8" fill="#fff" stroke="#2a5ab0"/><path d="M121 1024l2-3 2 2 3-3" stroke="#20a020"/>
<path d="M1773 1021a5 5 0 0 1 9 0v5" stroke="#6a90c0" stroke-width="2"/><path d="M1770 1018l3 5 3-4z" fill="#6a90c0"/>
<path d="M1806 1021a5 5 0 0 0-9 0v5" stroke="#6a90c0" stroke-width="2"/><path d="M1809 1018l-3 5-3-4z" fill="#6a90c0"/>
<path d="M1821 1027l5-6" stroke="#b03030" stroke-width="2.400"/><path d="M1825 1015h5v10h-5z" fill="#30b030" stroke="#222" stroke-width=".7"/>
<circle cx="1842" cy="1018" r="4.600" fill="#eef" stroke="#222" stroke-width="1.200"/><path d="M1845 1022l3 4" stroke="#222" stroke-width="2"/><path d="M1851 1013v10M1838 1027h8" stroke="#2a5ab0"/>
<circle cx="1864" cy="1018" r="4.600" fill="#eef" stroke="#222" stroke-width="1.200"/><path d="M1867 1022l3 4" stroke="#222" stroke-width="2"/><path d="M1861.500 1018h5" stroke="#2a5ab0" stroke-width="1.300"/>
<circle cx="1886" cy="1018" r="4.600" fill="#eef" stroke="#222" stroke-width="1.200"/><path d="M1889 1022l3 4" stroke="#222" stroke-width="2"/><path d="M1883.500 1018h5M1886 1015.500v5" stroke="#2a5ab0" stroke-width="1.300"/>
<path d="M1903 1014h11" stroke="#555" stroke-dasharray="1.500 1" stroke-width="2"/><path d="M1908.500 1018v7M1906 1023l2.500 3 2.500-3" stroke="#2a6ac0" stroke-width="1.300"/>
</svg>
</div></body></html>
